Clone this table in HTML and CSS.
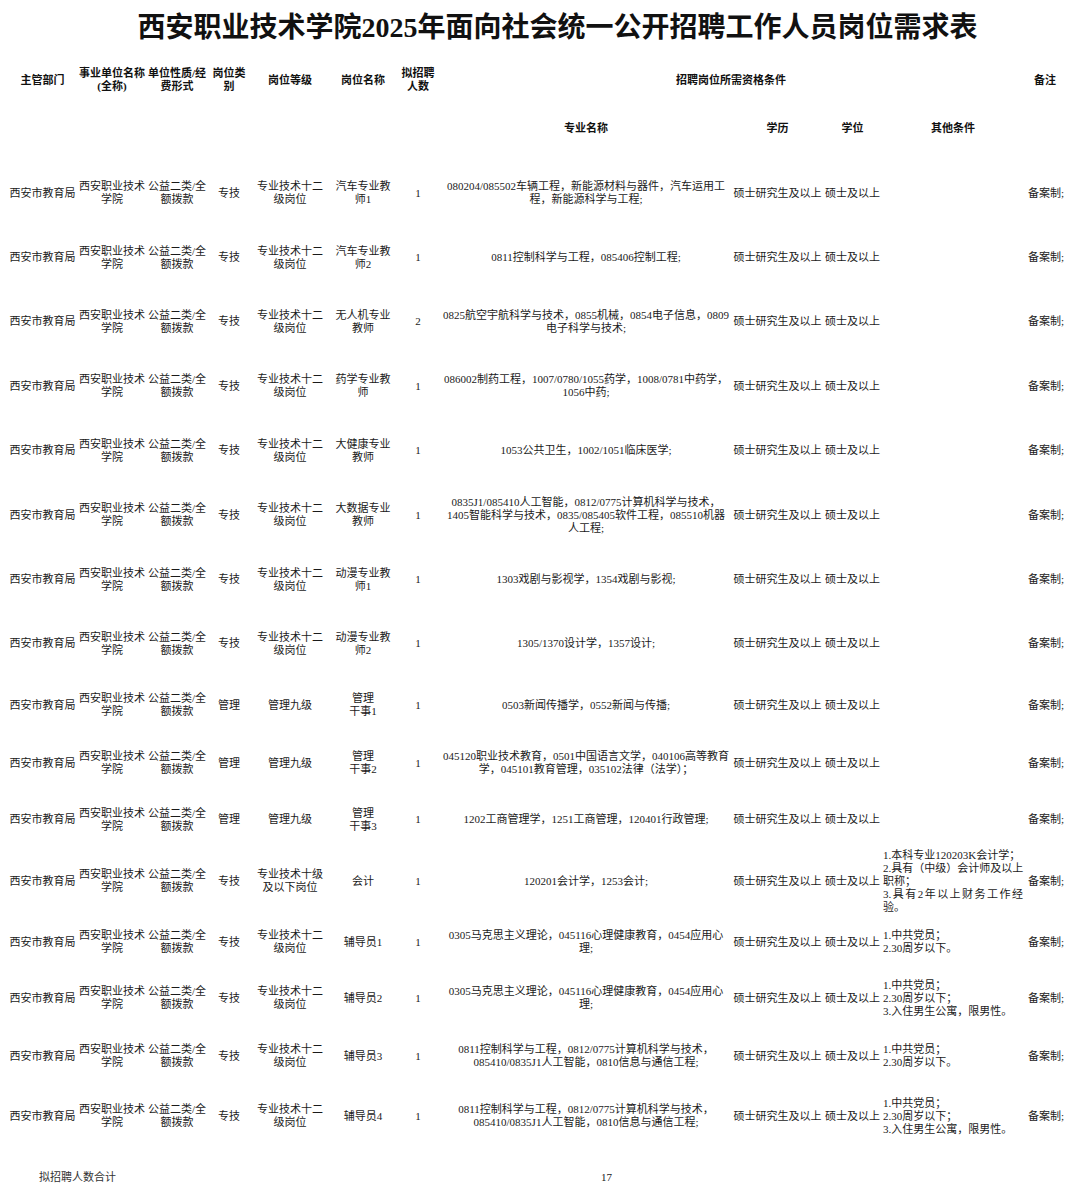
FILE: index.html
```html
<!DOCTYPE html>
<html lang="zh-CN">
<head>
<meta charset="utf-8">
<title>西安职业技术学院2025年面向社会统一公开招聘工作人员岗位需求表</title>
<link rel="stylesheet" href="styles.css">
</head>
<body>
<div class="sheet">
  <h1 class="title">西安职业技术学院2025年面向社会统一公开招聘工作人员岗位需求表</h1>
  <table class="grid">
    <colgroup>
      <col class="c1"><col class="c2"><col class="c3"><col class="c4"><col class="c5"><col class="c6">
      <col class="c7"><col class="c8"><col class="c9"><col class="c10"><col class="c11"><col class="c12">
    </colgroup>
    <thead>
      <tr class="hdr1">
        <th>主管部门</th>
        <th>事业单位名称<br>(全称)</th>
        <th>单位性质/经<br>费形式</th>
        <th>岗位类<br>别</th>
        <th>岗位等级</th>
        <th>岗位名称</th>
        <th>拟招聘<br>人数</th>
        <th colspan="4">招聘岗位所需资格条件</th>
        <th>备注</th>
      </tr>
      <tr class="hdr2">
        <th></th><th></th><th></th><th></th><th></th><th></th><th></th>
        <th>专业名称</th>
        <th>学历</th>
        <th>学位</th>
        <th>其他条件</th>
        <th></th>
      </tr>
    </thead>
    <tbody>
      <tr class="h64">
        <td>西安市教育局</td><td>西安职业技术<br>学院</td><td>公益二类/全<br>额拨款</td><td>专技</td><td>专业技术十二<br>级岗位</td><td>汽车专业教<br>师1</td><td>1</td>
        <td class="major">080204/085502车辆工程，新能源材料与器件，汽车运用工<br>程，新能源科学与工程;</td>
        <td>硕士研究生及以上</td><td>硕士及以上</td><td class="other"></td><td class="note">备案制;</td>
      </tr>
      <tr class="h64">
        <td>西安市教育局</td><td>西安职业技术<br>学院</td><td>公益二类/全<br>额拨款</td><td>专技</td><td>专业技术十二<br>级岗位</td><td>汽车专业教<br>师2</td><td>1</td>
        <td class="major">0811控制科学与工程，085406控制工程;</td>
        <td>硕士研究生及以上</td><td>硕士及以上</td><td class="other"></td><td class="note">备案制;</td>
      </tr>
      <tr class="h64">
        <td>西安市教育局</td><td>西安职业技术<br>学院</td><td>公益二类/全<br>额拨款</td><td>专技</td><td>专业技术十二<br>级岗位</td><td>无人机专业<br>教师</td><td>2</td>
        <td class="major">0825航空宇航科学与技术，0855机械，0854电子信息，0809<br>电子科学与技术;</td>
        <td>硕士研究生及以上</td><td>硕士及以上</td><td class="other"></td><td class="note">备案制;</td>
      </tr>
      <tr class="h64">
        <td>西安市教育局</td><td>西安职业技术<br>学院</td><td>公益二类/全<br>额拨款</td><td>专技</td><td>专业技术十二<br>级岗位</td><td>药学专业教<br>师</td><td>1</td>
        <td class="major">086002制药工程，1007/0780/1055药学，1008/0781中药学，<br>1056中药;</td>
        <td>硕士研究生及以上</td><td>硕士及以上</td><td class="other"></td><td class="note">备案制;</td>
      </tr>
      <tr class="h64">
        <td>西安市教育局</td><td>西安职业技术<br>学院</td><td>公益二类/全<br>额拨款</td><td>专技</td><td>专业技术十二<br>级岗位</td><td>大健康专业<br>教师</td><td>1</td>
        <td class="major">1053公共卫生，1002/1051临床医学;</td>
        <td>硕士研究生及以上</td><td>硕士及以上</td><td class="other"></td><td class="note">备案制;</td>
      </tr>
      <tr class="h64">
        <td>西安市教育局</td><td>西安职业技术<br>学院</td><td>公益二类/全<br>额拨款</td><td>专技</td><td>专业技术十二<br>级岗位</td><td>大数据专业<br>教师</td><td>1</td>
        <td class="major">0835J1/085410人工智能，0812/0775计算机科学与技术，<br>1405智能科学与技术，0835/085405软件工程，085510机器<br>人工程;</td>
        <td>硕士研究生及以上</td><td>硕士及以上</td><td class="other"></td><td class="note">备案制;</td>
      </tr>
      <tr class="h64">
        <td>西安市教育局</td><td>西安职业技术<br>学院</td><td>公益二类/全<br>额拨款</td><td>专技</td><td>专业技术十二<br>级岗位</td><td>动漫专业教<br>师1</td><td>1</td>
        <td class="major">1303戏剧与影视学，1354戏剧与影视;</td>
        <td>硕士研究生及以上</td><td>硕士及以上</td><td class="other"></td><td class="note">备案制;</td>
      </tr>
      <tr class="h64">
        <td>西安市教育局</td><td>西安职业技术<br>学院</td><td>公益二类/全<br>额拨款</td><td>专技</td><td>专业技术十二<br>级岗位</td><td>动漫专业教<br>师2</td><td>1</td>
        <td class="major">1305/1370设计学，1357设计;</td>
        <td>硕士研究生及以上</td><td>硕士及以上</td><td class="other"></td><td class="note">备案制;</td>
      </tr>
      <tr class="h58">
        <td>西安市教育局</td><td>西安职业技术<br>学院</td><td>公益二类/全<br>额拨款</td><td>管理</td><td>管理九级</td><td>管理<br>干事1</td><td>1</td>
        <td class="major">0503新闻传播学，0552新闻与传播;</td>
        <td>硕士研究生及以上</td><td>硕士及以上</td><td class="other"></td><td class="note">备案制;</td>
      </tr>
      <tr class="h58">
        <td>西安市教育局</td><td>西安职业技术<br>学院</td><td>公益二类/全<br>额拨款</td><td>管理</td><td>管理九级</td><td>管理<br>干事2</td><td>1</td>
        <td class="major">045120职业技术教育，0501中国语言文学，040106高等教育<br>学，045101教育管理，035102法律（法学）；</td>
        <td>硕士研究生及以上</td><td>硕士及以上</td><td class="other"></td><td class="note">备案制;</td>
      </tr>
      <tr class="h55">
        <td>西安市教育局</td><td>西安职业技术<br>学院</td><td>公益二类/全<br>额拨款</td><td>管理</td><td>管理九级</td><td>管理<br>干事3</td><td>1</td>
        <td class="major">1202工商管理学，1251工商管理，120401行政管理;</td>
        <td>硕士研究生及以上</td><td>硕士及以上</td><td class="other"></td><td class="note">备案制;</td>
      </tr>
      <tr class="h68">
        <td>西安市教育局</td><td>西安职业技术<br>学院</td><td>公益二类/全<br>额拨款</td><td>专技</td><td>专业技术十级<br>及以下岗位</td><td>会计</td><td>1</td>
        <td class="major">120201会计学，1253会计;</td>
        <td>硕士研究生及以上</td><td>硕士及以上</td>
        <td class="other">1.本科专业120203K会计学；<br>2.具有（中级）会计师及以上<br>职称；<span class="spread">3.具有2年以上财务工作经</span>验。</td>
        <td class="note">备案制;</td>
      </tr>
      <tr class="h54">
        <td>西安市教育局</td><td>西安职业技术<br>学院</td><td>公益二类/全<br>额拨款</td><td>专技</td><td>专业技术十二<br>级岗位</td><td>辅导员1</td><td>1</td>
        <td class="major">0305马克思主义理论，045116心理健康教育，0454应用心<br>理;</td>
        <td>硕士研究生及以上</td><td>硕士及以上</td>
        <td class="other">1.中共党员；<br>2.30周岁以下。</td>
        <td class="note">备案制;</td>
      </tr>
      <tr class="h58">
        <td>西安市教育局</td><td>西安职业技术<br>学院</td><td>公益二类/全<br>额拨款</td><td>专技</td><td>专业技术十二<br>级岗位</td><td>辅导员2</td><td>1</td>
        <td class="major">0305马克思主义理论，045116心理健康教育，0454应用心<br>理;</td>
        <td>硕士研究生及以上</td><td>硕士及以上</td>
        <td class="other">1.中共党员；<br>2.30周岁以下；<br>3.入住男生公寓，限男性。</td>
        <td class="note">备案制;</td>
      </tr>
      <tr class="h58">
        <td>西安市教育局</td><td>西安职业技术<br>学院</td><td>公益二类/全<br>额拨款</td><td>专技</td><td>专业技术十二<br>级岗位</td><td>辅导员3</td><td>1</td>
        <td class="major">0811控制科学与工程，0812/0775计算机科学与技术，<br>085410/0835J1人工智能，0810信息与通信工程;</td>
        <td>硕士研究生及以上</td><td>硕士及以上</td>
        <td class="other">1.中共党员；<br>2.30周岁以下。</td>
        <td class="note">备案制;</td>
      </tr>
      <tr class="h62">
        <td>西安市教育局</td><td>西安职业技术<br>学院</td><td>公益二类/全<br>额拨款</td><td>专技</td><td>专业技术十二<br>级岗位</td><td>辅导员4</td><td>1</td>
        <td class="major">0811控制科学与工程，0812/0775计算机科学与技术，<br>085410/0835J1人工智能，0810信息与通信工程;</td>
        <td>硕士研究生及以上</td><td>硕士及以上</td>
        <td class="other">1.中共党员；<br>2.30周岁以下；<br>3.入住男生公寓，限男性。</td>
        <td class="note">备案制;</td>
      </tr>
    </tbody>
    <tfoot>
      <tr class="h60">
        <td colspan="2" class="sum">拟招聘人数合计</td>
        <td colspan="4"></td>
        <td colspan="3" class="total">17</td>
        <td colspan="3"></td>
      </tr>
    </tfoot>
  </table>
</div>
</body>
</html>
```
FILE: styles.css
```css
html, body {
  margin: 0;
  padding: 0;
  background: #ffffff;
}

body {
  width: 1080px;
  font-family: "Liberation Serif", "Noto Sans CJK SC", serif;
  color: #1a1a1a;
}

.sheet {
  padding: 0 13px 0 8px;
}

.title {
  margin: 0;
  height: 49px;
  line-height: 49px;
  padding: 3px 0 0 40px;
  text-align: center;
  font-size: 28px;
  font-weight: 700;
  color: #111;
  white-space: nowrap;
}

.grid {
  width: 1059px;
  table-layout: fixed;
  border-collapse: collapse;
  border-spacing: 0;
  font-size: 11px;
  line-height: 13px;
}

.c1 { width: 69px; }
.c2 { width: 70px; }
.c3 { width: 60px; }
.c4 { width: 44px; }
.c5 { width: 78px; }
.c6 { width: 68px; }
.c7 { width: 42px; }
.c8 { width: 294px; }
.c9 { width: 89px; }
.c10 { width: 61px; }
.c11 { width: 140px; }
.c12 { width: 44px; }

.grid th,
.grid td {
  padding: 0;
  text-align: center;
  vertical-align: middle;
  white-space: nowrap;
  overflow: visible;
}

.grid th {
  font-weight: 700;
  color: #111;
}

.hdr1 { height: 56px; }

.hdr2 { height: 53px; }
.hdr2 th {
  vertical-align: top;
  padding-top: 14px;
}

.h64 { height: 64.4px; }
.h62 { height: 62px; }
.h60 { height: 60px; }
.h58 { height: 58px; }
.h55 { height: 55px; }
.h54 { height: 54px; }
.h68 { height: 68px; }

.grid td.other {
  text-align: left;
}

.spread {
  display: block;
  text-align: justify;
  text-align-last: justify;
  width: 140px;
}

.grid td.note {
  text-align: left;
  padding-left: 5px;
}

.grid td.sum {
  color: #333;
}

.grid td.total {
  text-align: center;
  padding-right: 6px;
}
```
